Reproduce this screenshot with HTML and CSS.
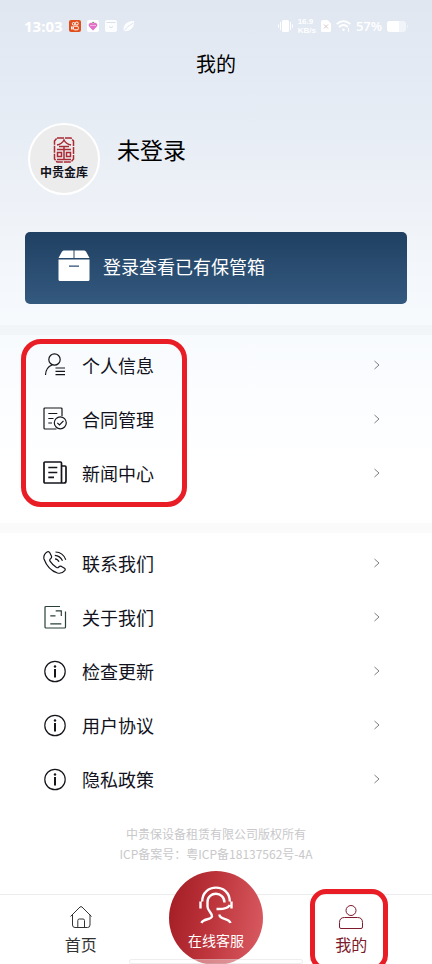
FILE: index.html
```
<!DOCTYPE html>
<html lang="zh-CN">
<head>
    <meta charset="UTF-8">
    <meta name="viewport" content="width=device-width, initial-scale=1.0">
    <title>我的</title>
    <link rel="stylesheet" href="styles.css">
</head>
<body>
<div class="page">
    <!-- Status bar -->
    <div class="status-bar">
        <div class="status-left">
            <span class="clock">13:03</span>
            <svg width="12" height="12" viewBox="0 0 12 12"><rect width="12" height="12" rx="2" fill="#e0501c"/><g fill="none" stroke="#fff" stroke-width="1"><circle cx="4.6" cy="3.8" r="1.3"/><circle cx="7.8" cy="3.5" r="1.5"/><rect x="4.5" y="6.2" width="4.8" height="3.6" rx="1"/><path d="M4.5 7.6L2.6 6.6V9.2L4.5 8.4"/></g></svg>
            <svg width="12" height="12" viewBox="0 0 12 12"><rect width="12" height="12" rx="2" fill="#fff"/><path d="M1.6 5C2 2.6 5 2.4 6 3.4C7 2.4 10 2.6 10.4 5C10.4 7 8 8 6 10.6C4 8 1.6 7 1.6 5Z" fill="#e070c8"/><path d="M5 3L6 1.4L7.4 3Z" fill="#5a8a50"/><path d="M3 5.5H9" stroke="#f4b4e4"/></svg>
            <svg width="12" height="12" viewBox="0 0 12 12"><rect width="12" height="12" rx="2" fill="#fcfdff"/><path d="M1.5 2.5H10.5M4 6.5Q6 9 8 6.5" fill="none" stroke="#d9e1ec"/></svg>
            <svg width="12" height="12" viewBox="0 0 12 12"><path d="M1 11C-1 6 4 0 11 1C12 7 7 12 1 11Z" fill="#fcfdff"/><path d="M1.5 10.5Q4 6 10.5 3" fill="none" stroke="#dfe6f0"/></svg>
        </div>
        <div class="status-right">
            <svg width="15" height="12" viewBox="0 0 15 12" fill="#fff"><rect x="4" width="7" height="12" rx="1.5"/><path d="M2 2H3V10H2ZM0 4.500H1V7.500H0ZM12 2H13V10H12ZM14 4.500H15V7.500H14Z"/></svg>
            <div class="speed">
                <div>16.9</div>
                <div>KB/s</div>
            </div>
            <svg width="10" height="12" viewBox="0 0 10 12"><path d="M2 0H6.500L10 3.500V10.500Q10 12 8.500 12H1.500Q0 12 0 10.500V2Q0 0 2 0Z" fill="#fff"/><path d="M3 4.500L7 8.500M7 4.500L3 8.500" stroke="#d3c9cb"/></svg>
            <svg width="15" height="12" viewBox="0 0 15 12" fill="none" stroke="#fff" stroke-width="1.800"><path d="M0.700 4.200Q7.500 -2 14.300 4.200M3 7Q7.500 3 12 7"/><circle cx="7.500" cy="9.800" r="1.200" fill="#fff" stroke="none"/><path d="M12.500 8V12" stroke-width="1"/></svg>
            <span class="percent">57%</span>
            <svg width="21" height="11" viewBox="0 0 21 11"><rect width="19" height="11" rx="3" fill="#f1f4f9"/><path d="M3 0H12V11H3Q0 11 0 8V3Q0 0 3 0Z" fill="#fff"/><path d="M20 3.500Q21.500 5.500 20 7.500Z" fill="#f4f6fa"/></svg>
        </div>
    </div>

    <h1 class="title">我的</h1>

    <!-- Profile -->
    <div class="profile">
        <div class="avatar">
            <svg width="22" height="26" viewBox="0 0 22 26" fill="none" stroke="#a82a35" stroke-width="1.500"><path d="M4 1H18L20.500 4V22L18 25H4L1.500 22V4Z" stroke-dasharray="7 1"/><path d="M4 8Q9 7 11 3Q13 7 18 8M6 9.500H16M4 12.500H18M11 9.500V22M4 22.500H18M4.500 15.500H8.500V19.500H4.500ZM13.500 15.500H17.500V19.500H13.500Z"/></svg>
            <span>中贵金库</span>
        </div>
        <a class="user-name" href="#">未登录</a>
    </div>

    <a class="box-card" href="#">
        <svg width="32" height="32" viewBox="0 0 32 32" fill="#fff"><path d="M5.500 0.500H15.500V8H0.500L4 1.500ZM16.500 0.500H26.500L28 1.500L31.500 8H16.500Z"/><path fill-rule="evenodd" d="M0.500 9.500H31.500V29.500Q31.500 31 30 31H2Q0.500 31 0.500 29.500ZM11 15.500V16.800H21V15.500Z"/></svg>
        <span>登录查看已有保管箱</span>
    </a>

    <div class="divider"></div>

    <!-- Account menu -->
    <nav class="menu menu-marked">
        <a class="menu-item" href="#">
            <svg class="icon" viewBox="0 0 24 24"><circle cx="11.500" cy="6.500" r="5.700"/><path d="M2.500 22C2.700 16.500 5 13.500 9 12M12.500 15H22M12.500 18.300H22M12.500 21.600H22"/></svg>
            <span>个人信息</span>
            <svg class="arrow" viewBox="0 0 6 10"><path d="M0.500 1L5 5L0.500 9"/></svg>
        </a>
        <a class="menu-item" href="#">
            <svg class="icon" viewBox="0 0 24 24"><path d="M19 9V2Q19 1 18 1H2Q1 1 1 2V21Q1 22 2 22H13.500M5.300 6.500H14.300M5.300 11.500H10.500M5.300 16H9"/><circle cx="17.300" cy="15.800" r="6"/><path d="M14.300 15.800L16.500 18L20.500 13.800"/></svg>
            <span>合同管理</span>
            <svg class="arrow" viewBox="0 0 6 10"><path d="M0.500 1L5 5L0.500 9"/></svg>
        </a>
        <a class="menu-item" href="#">
            <svg class="icon icon-bold" viewBox="0 0 24 24"><path d="M18.500 22H2Q1 22 1 21V2Q1 1 2 1H17.500Q18.500 1 18.500 2ZM18.500 5H22Q23 5 23 6V20Q23 22 21 22H18.500M5.300 6.500H14.300M5.300 11.500H14.300M5.300 16.300H11"/></svg>
            <span>新闻中心</span>
            <svg class="arrow" viewBox="0 0 6 10"><path d="M0.500 1L5 5L0.500 9"/></svg>
        </a>
    </nav>

    <div class="divider"></div>

    <!-- Support menu -->
    <nav class="menu">
        <a class="menu-item" href="#">
            <svg class="icon" viewBox="0 0 24 24"><path d="M4.500 0.800Q6 0.200 6.800 1.800L8.400 5Q9 6.500 7.800 7.500Q6.200 8.600 7 10.200Q9.500 14 13.500 16.500Q14.800 17.200 15.800 16Q17 14.600 18.500 15.400L21.500 17.200Q22.800 18.200 21.700 19.700Q19 23 14.500 22Q5 19 1 8Q0 3.500 4.500 0.800ZM12.500 1Q20 1.200 22.800 8.800M11.800 4.300Q17 4.500 19.500 9.800M12 7.800Q14.800 8 16 10.800"/></svg>
            <span>联系我们</span>
            <svg class="arrow" viewBox="0 0 6 10"><path d="M0.500 1L5 5L0.500 9"/></svg>
        </a>
        <a class="menu-item" href="#">
            <svg class="icon icon-green" viewBox="0 0 24 24"><path d="M17 1.500H3Q2 1.500 2 2.500V22Q2 23 3 23H21.500Q22.500 23 22.500 22V6.500M12.700 5.800H18.300V11M7.300 10.800H12.500M7.300 18.800H18.300"/></svg>
            <span>关于我们</span>
            <svg class="arrow" viewBox="0 0 6 10"><path d="M0.500 1L5 5L0.500 9"/></svg>
        </a>
        <a class="menu-item" href="#">
            <svg class="icon" viewBox="0 0 24 24"><circle cx="12" cy="12.500" r="10.200"/><circle class="dot" cx="12" cy="7.500" r="1.200"/><path class="stem" d="M12 10V18.500"/></svg>
            <span>检查更新</span>
            <svg class="arrow" viewBox="0 0 6 10"><path d="M0.500 1L5 5L0.500 9"/></svg>
        </a>
        <a class="menu-item" href="#">
            <svg class="icon" viewBox="0 0 24 24"><circle cx="12" cy="12.500" r="10.200"/><circle class="dot" cx="12" cy="7.500" r="1.200"/><path class="stem" d="M12 10V18.500"/></svg>
            <span>用户协议</span>
            <svg class="arrow" viewBox="0 0 6 10"><path d="M0.500 1L5 5L0.500 9"/></svg>
        </a>
        <a class="menu-item" href="#">
            <svg class="icon" viewBox="0 0 24 24"><circle cx="12" cy="12.500" r="10.200"/><circle class="dot" cx="12" cy="7.500" r="1.200"/><path class="stem" d="M12 10V18.500"/></svg>
            <span>隐私政策</span>
            <svg class="arrow" viewBox="0 0 6 10"><path d="M0.500 1L5 5L0.500 9"/></svg>
        </a>
    </nav>

    <footer class="copyright">
        <div>中贵保设备租赁有限公司版权所有</div>
        <div>ICP备案号：粤ICP备18137562号-4A</div>
    </footer>

    <!-- Bottom tabs -->
    <nav class="tab-bar">
        <a class="tab" href="#">
            <svg width="24" height="24" viewBox="0 0 24 24"><path d="M1.500 11.500L11 2Q12 1.200 13 2L22.500 11.500M3.500 9.800V20Q3.500 22.500 6 22.500H18.500Q21 22.500 21 20V9.800M8.800 22.500V15.500Q8.800 14 10.300 14H14Q15.500 14 15.500 15.500V22.500"/></svg>
            <span>首页</span>
        </a>
        <div class="tab">
            <button class="service" type="button">
                <svg width="34" height="38" viewBox="0 0 34 38"><path d="M1.500 22.500V15.500M3.200 15.500C3.200 -3 30.800 -3 30.800 15.500M32.500 15.500V22.500M30.800 19C29 22.500 25 23.300 17.500 23M25.500 16.500C25.500 5 8.500 5 8.500 16V20.500C8.500 25 13 26.500 13 30.500C12 34 4 32.500 2.500 37M20.500 28.500C20 34 30 31.500 31.500 37"/></svg>
                <span>在线客服</span>
            </button>
        </div>
        <a class="tab tab-active" href="#">
            <svg width="24" height="24" viewBox="0 0 24 24"><circle cx="12" cy="5.500" r="5"/><path d="M2 23.500Q0.500 23.500 0.500 22V17.500Q0.500 12.500 5.500 12.500H18.500Q23.500 12.500 23.500 17.500V22Q23.500 23.500 22 23.500Z"/></svg>
            <span>我的</span>
        </a>
        <div class="home-indicator"></div>
    </nav>
</div>
</body>
</html>
```
FILE: styles.css
```
*,
*::after {
    box-sizing: border-box;
}

body {
    margin: 0;
    font-family: "Noto Sans CJK SC", sans-serif;
    color: #11121c;
    background-color: #fff;
}

a {
    color: inherit;
    text-decoration: none;
}

svg {
    display: block;
    flex-shrink: 0;
}

.page {
    min-height: 100vh;
    display: flex;
    flex-direction: column;
    overflow: hidden;
    background: linear-gradient(to bottom, #e1e7f1 0, #e7edf5 130px, #f0f3f8 230px, #f7fafd 320px, #fbfdff 400px, #fff 470px);
}

/* Status bar */
.status-bar {
    height: 52px;
    padding: 0 24px;
    display: flex;
    align-items: center;
    justify-content: space-between;
    color: #fff;
    font-family: "Open Sans", sans-serif;
    font-weight: 600;
}

.status-left,
.status-right {
    display: flex;
    align-items: center;
    gap: 6px;
}

.status-right {
    gap: 5px;
}

.clock {
    font-size: 15px;
    font-weight: 700;
}

.percent {
    font-size: 13px;
}

.speed {
    font-family: "Liberation Sans", sans-serif;
    font-size: 8px;
    line-height: 9px;
    font-weight: 700;
}

.title {
    margin: 0;
    font-size: 20px;
    line-height: 24px;
    font-weight: 400;
    text-align: center;
    color: #000;
}

/* Profile */
.profile {
    margin: 47px 28px 0;
    display: flex;
    align-items: flex-start;
    gap: 17px;
}

.avatar {
    width: 72px;
    height: 72px;
    border: 2px solid #fff;
    border-radius: 50%;
    background-color: #ececed;
    display: flex;
    flex-direction: column;
    align-items: center;
    justify-content: center;
    gap: 2px;
    font-family: "Liberation Serif", "Noto Sans CJK SC", serif;
    font-size: 12px;
    line-height: 16px;
    font-weight: 700;
    white-space: nowrap;
}

.user-name {
    margin-top: 10px;
    font-size: 23px;
    line-height: 32px;
    color: #000;
}

.box-card {
    margin: 37px 25px 21px;
    padding: 18px 33px 22px;
    display: flex;
    align-items: center;
    gap: 13px;
    border-radius: 5px;
    background: linear-gradient(to bottom, #1f4062, #34597f);
    color: #fff;
    font-size: 18px;
    line-height: 32px;
}

.divider {
    height: 10px;
    background-color: rgba(0, 0, 0, 0.02);
}

/* Menus */
.menu {
    position: relative;
    padding-top: 3px;
}

.menu-item {
    height: 54px;
    padding: 0 52px 0 43px;
    display: flex;
    align-items: center;
    gap: 15px;
    font-size: 18px;
}

.menu-item span {
    flex: 1;
}

.icon {
    width: 24px;
    height: 24px;
    fill: none;
    stroke: #15161c;
    stroke-width: 1.2;
}

.icon-bold {
    stroke-width: 1.7;
}

.icon-green {
    stroke: #2a3f38;
}

.icon .dot {
    fill: #15161c;
    stroke: none;
}

.icon .stem {
    stroke-width: 2;
}

.arrow {
    width: 6px;
    height: 10px;
    fill: none;
    stroke: #7c7e82;
}

.menu-marked {
    padding-bottom: 23px;
}

/* Red highlight frames */
.menu-marked::after,
.tab-active::after {
    content: "";
    position: absolute;
    border: 5px solid #e91d25;
    pointer-events: none;
}

.menu-marked::after {
    top: 4px;
    left: 21px;
    width: 166px;
    height: 168px;
    border-radius: 20px;
}

.copyright {
    margin: 18px 0 30px;
    font-size: 12px;
    line-height: 20px;
    text-align: center;
    color: #c8c8ca;
}

/* Bottom tabs */
.tab-bar {
    position: relative;
    height: 70px;
    margin-top: auto;
    padding: 0 13px;
    display: flex;
    border-top: 1px solid #ececee;
    background-color: #fff;
}

.tab {
    position: relative;
    flex: 1;
    display: flex;
    flex-direction: column;
    align-items: center;
    gap: 3px;
    padding-top: 10px;
    font-size: 16px;
    line-height: 24px;
    color: #333;
}

.tab svg {
    fill: none;
    stroke: currentColor;
    stroke-width: 1;
}

.tab-active {
    color: #7d1a2b;
}

.tab-active::after {
    top: -6px;
    left: 50%;
    width: 78px;
    height: 82px;
    margin-left: -41px;
    border-radius: 16px;
}

.service {
    flex-shrink: 0;
    width: 94px;
    height: 94px;
    margin-top: -34px;
    padding: 0;
    display: flex;
    flex-direction: column;
    align-items: center;
    justify-content: center;
    gap: 6px;
    border: none;
    border-radius: 50%;
    background: linear-gradient(100deg, #a21b23, #bd343b 45%, #db5d64);
    color: #fff;
    font-family: inherit;
    font-size: 14px;
    line-height: 20px;
    cursor: pointer;
}

.service svg {
    stroke-width: 2.4;
    stroke-linejoin: round;
}

.home-indicator {
    position: absolute;
    bottom: 0;
    left: 50%;
    width: 174px;
    height: 5px;
    margin-left: -87px;
    border: 1px solid rgba(200, 200, 200, 0.3);
    border-radius: 3px;
    background-color: rgba(255, 255, 255, 0.4);
}
```
